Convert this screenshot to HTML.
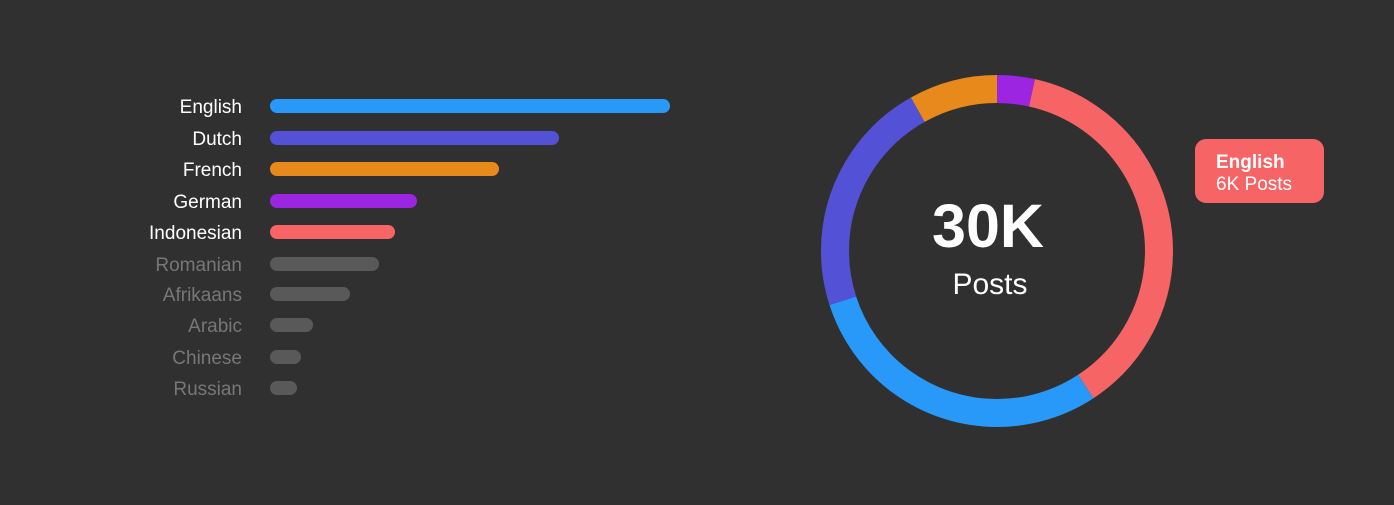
<!DOCTYPE html>
<html><head><meta charset="utf-8"><style>
html,body{margin:0;padding:0;background:#303030;}
svg{display:block;}
text{font-family:"Liberation Sans",Arial,sans-serif;}
</style></head><body>
<svg width="1394" height="505" viewBox="0 0 1394 505" xmlns="http://www.w3.org/2000/svg">
<rect width="1394" height="505" fill="#303030"/>
<g font-size="19" text-anchor="end">
<text x="242" y="113" fill="#fff">English</text>
<text x="242" y="145" fill="#fff">Dutch</text>
<text x="242" y="176" fill="#fff">French</text>
<text x="242" y="208" fill="#fff">German</text>
<text x="242" y="239" fill="#fff">Indonesian</text>
<text x="242" y="271" fill="#777">Romanian</text>
<text x="242" y="301" fill="#777">Afrikaans</text>
<text x="242" y="332" fill="#777">Arabic</text>
<text x="242" y="364" fill="#777">Chinese</text>
<text x="242" y="395" fill="#777">Russian</text>
</g>
<g stroke-linecap="round" stroke-width="14">
<line x1="277" y1="106" x2="663" y2="106" stroke="#2899f9"/>
<line x1="277" y1="138" x2="552" y2="138" stroke="#5352d6"/>
<line x1="277" y1="169" x2="492" y2="169" stroke="#e8891c"/>
<line x1="277" y1="201" x2="410" y2="201" stroke="#9b25e0"/>
<line x1="277" y1="232" x2="388" y2="232" stroke="#f66465"/>
<line x1="277" y1="264" x2="372" y2="264" stroke="#595959"/>
<line x1="277" y1="294" x2="343" y2="294" stroke="#595959"/>
<line x1="277" y1="325" x2="306" y2="325" stroke="#595959"/>
<line x1="277" y1="357" x2="294" y2="357" stroke="#595959"/>
<line x1="277" y1="388" x2="290" y2="388" stroke="#595959"/>
</g>
<g transform="rotate(-90 997 251)" fill="none" stroke-width="28">
<circle cx="997" cy="251" r="162" stroke="#9b25e0" stroke-dasharray="35.3 2000" stroke-dashoffset="0"/>
<circle cx="997" cy="251" r="162" stroke="#f66465" stroke-dasharray="379.5 2000" stroke-dashoffset="-35.3"/>
<circle cx="997" cy="251" r="162" stroke="#2899f9" stroke-dasharray="297.7 2000" stroke-dashoffset="-414.8"/>
<circle cx="997" cy="251" r="162" stroke="#5352d6" stroke-dasharray="222.2 2000" stroke-dashoffset="-712.5"/>
<circle cx="997" cy="251" r="162" stroke="#e8891c" stroke-dasharray="83.2 2000" stroke-dashoffset="-934.7"/>
</g>
<text x="988" y="247" text-anchor="middle" font-size="61" font-weight="bold" fill="#fff">30K</text>
<text x="990" y="294" text-anchor="middle" font-size="30" fill="#fff">Posts</text>
<rect x="1195" y="139" width="129" height="64" rx="11" fill="#f66465"/>
<text x="1216" y="168" font-size="19" font-weight="bold" fill="#fff">English</text>
<text x="1216" y="190" font-size="19" fill="#fff">6K Posts</text>
</svg>
</body></html>
